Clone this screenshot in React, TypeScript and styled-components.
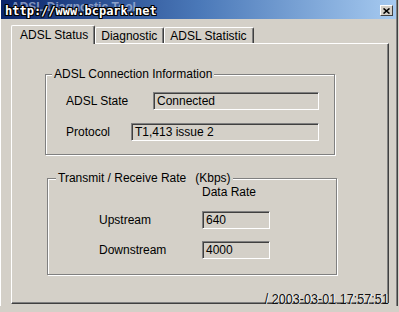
import React from "react";
import styled, { createGlobalStyle } from "styled-components";

const GlobalStyle = createGlobalStyle`
  html, body {
    margin: 0;
    padding: 0;
    background: #d4d0c8;
  }
  * {
    box-sizing: border-box;
  }
`;

const Window = styled.div`
  position: relative;
  width: 399px;
  height: 312px;
  background: #d4d0c8;
  font-family: "Liberation Sans", Arial, sans-serif;
  font-size: 12px;
  color: #000;
  border-right: 1px solid #d4d0c8;
  overflow: hidden;
`;

const Frame = styled.div`
  width: 398px;
  height: 306px;
  border-right: 1px solid #404040;
  border-left: 1px solid #ffffff;
  box-shadow: inset -1px 0 0 #808080;
`;

const TitleBar = styled.div`
  position: relative;
  height: 19px;
  margin-right: 1px;
  background: linear-gradient(to right, #0a246a 0%, #4a78b8 50%, #a6caf0 100%);
  display: flex;
  align-items: flex-start;
  padding: 1px 4px 0 10px;
`;

const TitleText = styled.span`
  font-weight: bold;
  font-size: 12px;
  line-height: 13px;
  color: #c8d4ec;
  opacity: 0.6;
`;

const Watermark = styled.span`
  position: absolute;
  left: 4px;
  top: 4px;
  font-family: "DejaVu Sans Mono", monospace;
  font-weight: bold;
  font-size: 12px;
  line-height: 15px;
  color: #ffffff;
  text-shadow: 1px 0 0 #000, -1px 0 0 #000, 0 1px 0 #000, 0 -1px 0 #000,
    1px 1px 0 #000, -1px -1px 0 #000, 1px -1px 0 #000, -1px 1px 0 #000;
`;

const CloseButton = styled.div`
  position: absolute;
  right: 3px;
  top: 5px;
  width: 13px;
  height: 11px;
  background: #d4d0c8;
  border-top: 1px solid #ffffff;
  border-left: 1px solid #ffffff;
  border-right: 1px solid #404040;
  border-bottom: 1px solid #404040;
  display: flex;
  align-items: center;
  justify-content: center;
`;

const Body = styled.div`
  padding: 6px 0 0 10px;
`;

const TabRow = styled.div`
  display: flex;
  align-items: flex-end;
  height: 18px;
`;

const Tab = styled.div<{ $active?: boolean }>`
  position: relative;
  z-index: ${(p) => (p.$active ? 1 : 0)};
  height: ${(p) => (p.$active ? "19px" : "16px")};
  margin-bottom: ${(p) => (p.$active ? "-1px" : "0")};
  padding: ${(p) => (p.$active ? "2px 6px 0 8px" : "0 6px 0 5px")};
  background: #d4d0c8;
  border-top: 1px solid #ffffff;
  border-left: 1px solid #ffffff;
  border-right: 1px solid #404040;
  box-shadow: inset -1px 0 0 #808080;
  border-top-left-radius: 2px;
  border-top-right-radius: 2px;
  display: flex;
  align-items: ${(p) => (p.$active ? "flex-start" : "center")};
  line-height: 14px;
  white-space: nowrap;
`;

const Pane = styled.div`
  width: 378px;
  height: 261px;
  border-top: 1px solid #ffffff;
  border-left: 1px solid #ffffff;
  border-right: 1px solid #404040;
  border-bottom: 1px solid #404040;
  box-shadow: inset -1px -1px 0 #808080;
  padding-top: 23px;
`;

const Group = styled.fieldset<{ $left: number; $gap?: number }>`
  margin: ${(p) => p.$gap ?? 0}px 0 0 ${(p) => p.$left}px;
  width: 290px;
  padding: 0;
  border: 1px solid #808080;
  box-shadow: inset 1px 1px 0 #ffffff, 1px 1px 0 #ffffff;
  min-width: 0;
`;

const Caption = styled.legend<{ $indent: number }>`
  margin-left: ${(p) => p.$indent}px;
  padding: 0 2px;
  line-height: 14px;
  background: #d4d0c8;
  white-space: nowrap;
`;

const Unit = styled.span`
  margin-left: 9px;
`;

const InfoRows = styled.div`
  display: flex;
  flex-direction: column;
  gap: 13px;
  padding: 11px 15px 13px 20px;
`;

const InfoRow = styled.div`
  display: flex;
  align-items: center;
  justify-content: space-between;
`;

const Label = styled.span`
  line-height: 14px;
  white-space: nowrap;
`;

const Field = styled.div<{ $width: number }>`
  width: ${(p) => p.$width}px;
  height: 18px;
  border-top: 1px solid #808080;
  border-left: 1px solid #808080;
  border-right: 1px solid #ffffff;
  border-bottom: 1px solid #ffffff;
  box-shadow: inset 1px 1px 0 #404040;
  padding: 1px 0 0 3px;
  line-height: 15px;
  white-space: nowrap;
  overflow: hidden;
`;

const RateGrid = styled.div`
  display: grid;
  grid-template-columns: 103px 68px;
  grid-template-rows: 14px 18px 18px;
  row-gap: 12px;
  align-items: center;
  padding: 0 0 15px 51px;
`;

const HeadCell = styled.span`
  grid-column: 2;
  line-height: 14px;
`;

const Stamp = styled.span`
  position: absolute;
  right: 9px;
  top: 292px;
  font-family: "Liberation Sans", Arial, sans-serif;
  font-size: 14px;
  line-height: 14px;
  color: #111;
  transform: scaleX(0.9);
  transform-origin: right center;
  white-space: nowrap;
  text-shadow: 1px 0 0 #fff;
`;

export default function App() {
  return (
    <>
      <GlobalStyle />
      <Window>
        <Frame>
          <TitleBar>
            <TitleText>ADSL Diagnostic Tool</TitleText>
            <Watermark>http://www.bcpark.net</Watermark>
            <CloseButton>
              <svg width="7" height="6" viewBox="0 0 7 6">
                <path d="M0.5 0.5 L6.5 5.5 M6.5 0.5 L0.5 5.5" stroke="#000" strokeWidth="1.6" />
              </svg>
            </CloseButton>
          </TitleBar>
          <Body>
            <TabRow>
              <Tab $active>ADSL Status</Tab>
              <Tab>Diagnostic</Tab>
              <Tab>ADSL Statistic</Tab>
            </TabRow>
            <Pane>
              <Group $left={33}>
                <Caption $indent={6}>ADSL Connection Information</Caption>
                <InfoRows>
                  <InfoRow>
                    <Label>ADSL State</Label>
                    <Field $width={166}>Connected</Field>
                  </InfoRow>
                  <InfoRow>
                    <Label>Protocol</Label>
                    <Field $width={188}>T1,413 issue 2</Field>
                  </InfoRow>
                </InfoRows>
              </Group>
              <Group $left={35} $gap={16}>
                <Caption $indent={8}>
                  Transmit / Receive Rate<Unit>(Kbps)</Unit>
                </Caption>
                <RateGrid>
                  <HeadCell>Data Rate</HeadCell>
                  <Label>Upstream</Label>
                  <Field $width={68}>640</Field>
                  <Label>Downstream</Label>
                  <Field $width={68}>4000</Field>
                </RateGrid>
              </Group>
            </Pane>
          </Body>
        </Frame>
        <Stamp>/ 2003-03-01 17:57:51</Stamp>
      </Window>
    </>
  );
}
